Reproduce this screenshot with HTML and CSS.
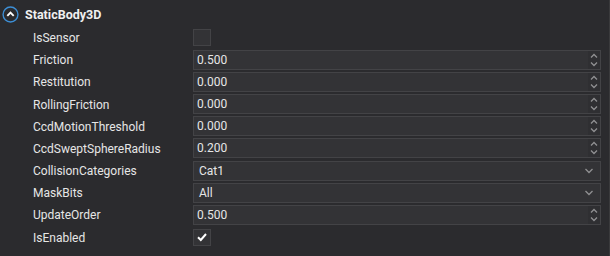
FILE: index.html
```html
<!DOCTYPE html>
<html>
<head>
<meta charset="utf-8">
<link rel="stylesheet" href="styles.css">
</head>
<body>
<div class="panel">
  <div class="header">
    <svg class="collapse" width="17" height="17" viewBox="0 0 16 16">
      <circle cx="8" cy="8" r="7" fill="none" stroke="#3d8fd6" stroke-width="1.3"/>
      <path d="M5 9.3 L8 6.3 L11 9.3" fill="none" stroke="#fff" stroke-width="1.8"/>
    </svg>
    <span class="title">StaticBody3D</span>
  </div>
  <div class="rows">
    <div class="label">IsSensor</div>
    <div class="value"><div class="check"></div></div>

    <div class="label">Friction</div>
    <div class="value"><div class="field num"><span class="txt">0.500</span><span class="spin"><svg width="10" height="16" viewBox="0 0 10 16"><path d="M2 5.5 L5 2.5 L8 5.5" fill="none" stroke="#909092" stroke-width="1.3"/><path d="M2 10.5 L5 13.5 L8 10.5" fill="none" stroke="#909092" stroke-width="1.3"/></svg></span></div></div>

    <div class="label">Restitution</div>
    <div class="value"><div class="field num"><span class="txt">0.000</span><span class="spin"><svg width="10" height="16" viewBox="0 0 10 16"><path d="M2 5.5 L5 2.5 L8 5.5" fill="none" stroke="#909092" stroke-width="1.3"/><path d="M2 10.5 L5 13.5 L8 10.5" fill="none" stroke="#909092" stroke-width="1.3"/></svg></span></div></div>

    <div class="label">RollingFriction</div>
    <div class="value"><div class="field num"><span class="txt">0.000</span><span class="spin"><svg width="10" height="16" viewBox="0 0 10 16"><path d="M2 5.5 L5 2.5 L8 5.5" fill="none" stroke="#909092" stroke-width="1.3"/><path d="M2 10.5 L5 13.5 L8 10.5" fill="none" stroke="#909092" stroke-width="1.3"/></svg></span></div></div>

    <div class="label">CcdMotionThreshold</div>
    <div class="value"><div class="field num"><span class="txt">0.000</span><span class="spin"><svg width="10" height="16" viewBox="0 0 10 16"><path d="M2 5.5 L5 2.5 L8 5.5" fill="none" stroke="#909092" stroke-width="1.3"/><path d="M2 10.5 L5 13.5 L8 10.5" fill="none" stroke="#909092" stroke-width="1.3"/></svg></span></div></div>

    <div class="label">CcdSweptSphereRadius</div>
    <div class="value"><div class="field num"><span class="txt">0.200</span><span class="spin"><svg width="10" height="16" viewBox="0 0 10 16"><path d="M2 5.5 L5 2.5 L8 5.5" fill="none" stroke="#909092" stroke-width="1.3"/><path d="M2 10.5 L5 13.5 L8 10.5" fill="none" stroke="#909092" stroke-width="1.3"/></svg></span></div></div>

    <div class="label">CollisionCategories</div>
    <div class="value"><div class="field drop"><span class="txt">Cat1</span><span class="arrow"><svg width="10" height="8" viewBox="0 0 10 8"><path d="M1.5 2 L5 5.5 L8.5 2" fill="none" stroke="#909092" stroke-width="1.3"/></svg></span></div></div>

    <div class="label">MaskBits</div>
    <div class="value"><div class="field drop"><span class="txt">All</span><span class="arrow"><svg width="10" height="8" viewBox="0 0 10 8"><path d="M1.5 2 L5 5.5 L8.5 2" fill="none" stroke="#909092" stroke-width="1.3"/></svg></span></div></div>

    <div class="label">UpdateOrder</div>
    <div class="value"><div class="field num"><span class="txt">0.500</span><span class="spin"><svg width="10" height="16" viewBox="0 0 10 16"><path d="M2 5.5 L5 2.5 L8 5.5" fill="none" stroke="#909092" stroke-width="1.3"/><path d="M2 10.5 L5 13.5 L8 10.5" fill="none" stroke="#909092" stroke-width="1.3"/></svg></span></div></div>

    <div class="label">IsEnabled</div>
    <div class="value"><div class="check"><svg width="12" height="12" viewBox="0 0 12 12"><path d="M2 6.2 L4.8 9 L10 3" fill="none" stroke="#ffffff" stroke-width="2"/></svg></div></div>
  </div>
</div>
</body>
</html>
```

FILE: styles.css
```css
html, body {
  margin: 0;
  padding: 0;
  background: #2b2b2e;
  width: 610px;
  height: 256px;
  overflow: hidden;
}
.panel {
  width: 609px;
  height: 256px;
  border-right: 1px solid #3a3a3c;
  font-family: Roboto, "Liberation Sans", sans-serif;
  color: #e6e6e6;
  font-size: 12px;
}
.header {
  height: 26.4px;
  display: flex;
  align-items: center;
  padding-left: 2px;
  box-sizing: border-box;
  padding-top: 3px;
}
.collapse {
  display: block;
}
.title {
  margin-left: 6px;
  font-weight: bold;
  font-size: 12.5px;
  color: #f0f0f0;
}
.rows {
  display: grid;
  grid-template-columns: 160px 408px;
  grid-auto-rows: 22.2px;
  padding-left: 33px;
}
.label {
  display: flex;
  align-items: center;
  padding-top: 1px;
}
.value {
  display: flex;
  align-items: center;
}
.check {
  width: 16px;
  height: 15px;
  border: 1px solid #434346;
  background: #333336;
  display: flex;
  align-items: center;
  justify-content: center;
}
.field {
  box-sizing: border-box;
  width: 408px;
  height: 20px;
  border: 1px solid #434346;
  background: #333336;
  display: flex;
  align-items: center;
  justify-content: space-between;
}
.num .txt {
  padding-left: 3px;
}
.drop .txt {
  padding-left: 5px;
}
.spin {
  width: 12px;
  height: 18px;
  background: #2f2f32;
  display: flex;
  align-items: center;
  justify-content: center;
}
.spin svg, .arrow svg {
  display: block;
}
.arrow {
  padding-right: 6px;
}
```
